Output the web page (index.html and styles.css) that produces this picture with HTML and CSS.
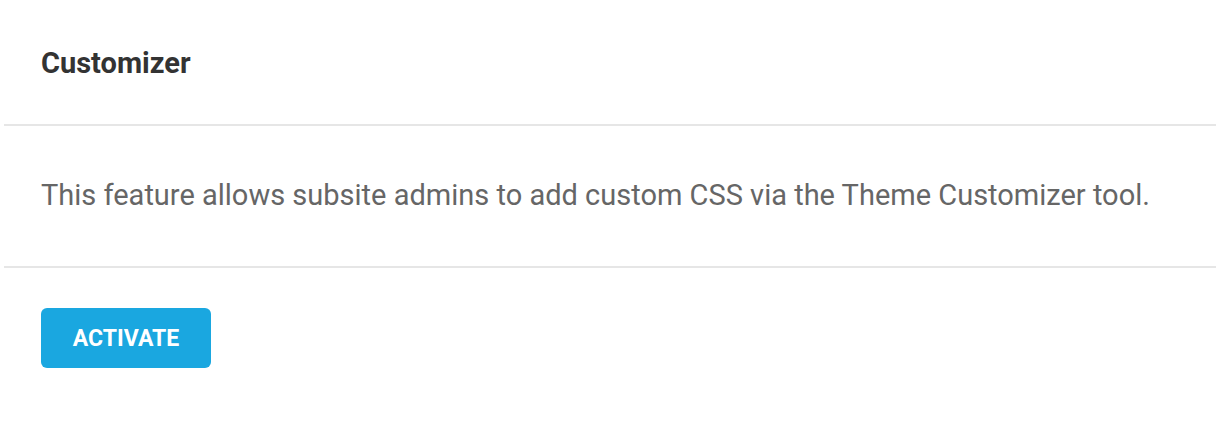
FILE: index.html
```html
<!DOCTYPE html>
<html>
<head>
<meta charset="utf-8">
<link rel="stylesheet" href="styles.css">
</head>
<body>
<div class="card">
  <div class="card-header">
    <h2 class="title">Customizer</h2>
  </div>
  <div class="card-body">
    <p class="desc">This feature allows subsite admins to add custom CSS via the Theme Customizer tool.</p>
  </div>
  <div class="card-footer">
    <button class="btn">ACTIVATE</button>
  </div>
</div>
</body>
</html>
```
FILE: styles.css
```css
html, body {
  margin: 0;
  padding: 0;
  background: #fff;
}
body {
  font-family: Roboto, "Liberation Sans", sans-serif;
}
.card {
  margin: 0 4px;
}
.card-header {
  padding: 43px 37px 41px;
  border-bottom: 2px solid #e6e6e6;
}
.title {
  margin: 0;
  font-size: 29px;
  line-height: 40px;
  font-weight: 700;
  color: #333;
}
.card-body {
  padding: 49px 37px 51px;
  border-bottom: 2px solid #e6e6e6;
}
.desc {
  margin: 0;
  font-size: 29px;
  line-height: 40px;
  color: #666;
}
.card-footer {
  padding: 40px 37px;
}
.btn {
  display: flex;
  align-items: center;
  justify-content: center;
  width: 170px;
  height: 60px;
  border: none;
  border-radius: 6px;
  background: #1aa7e0;
  color: #fff;
  font-family: Roboto, "Liberation Sans", sans-serif;
  font-size: 23px;
  font-weight: 700;
  padding: 0;
}
```
